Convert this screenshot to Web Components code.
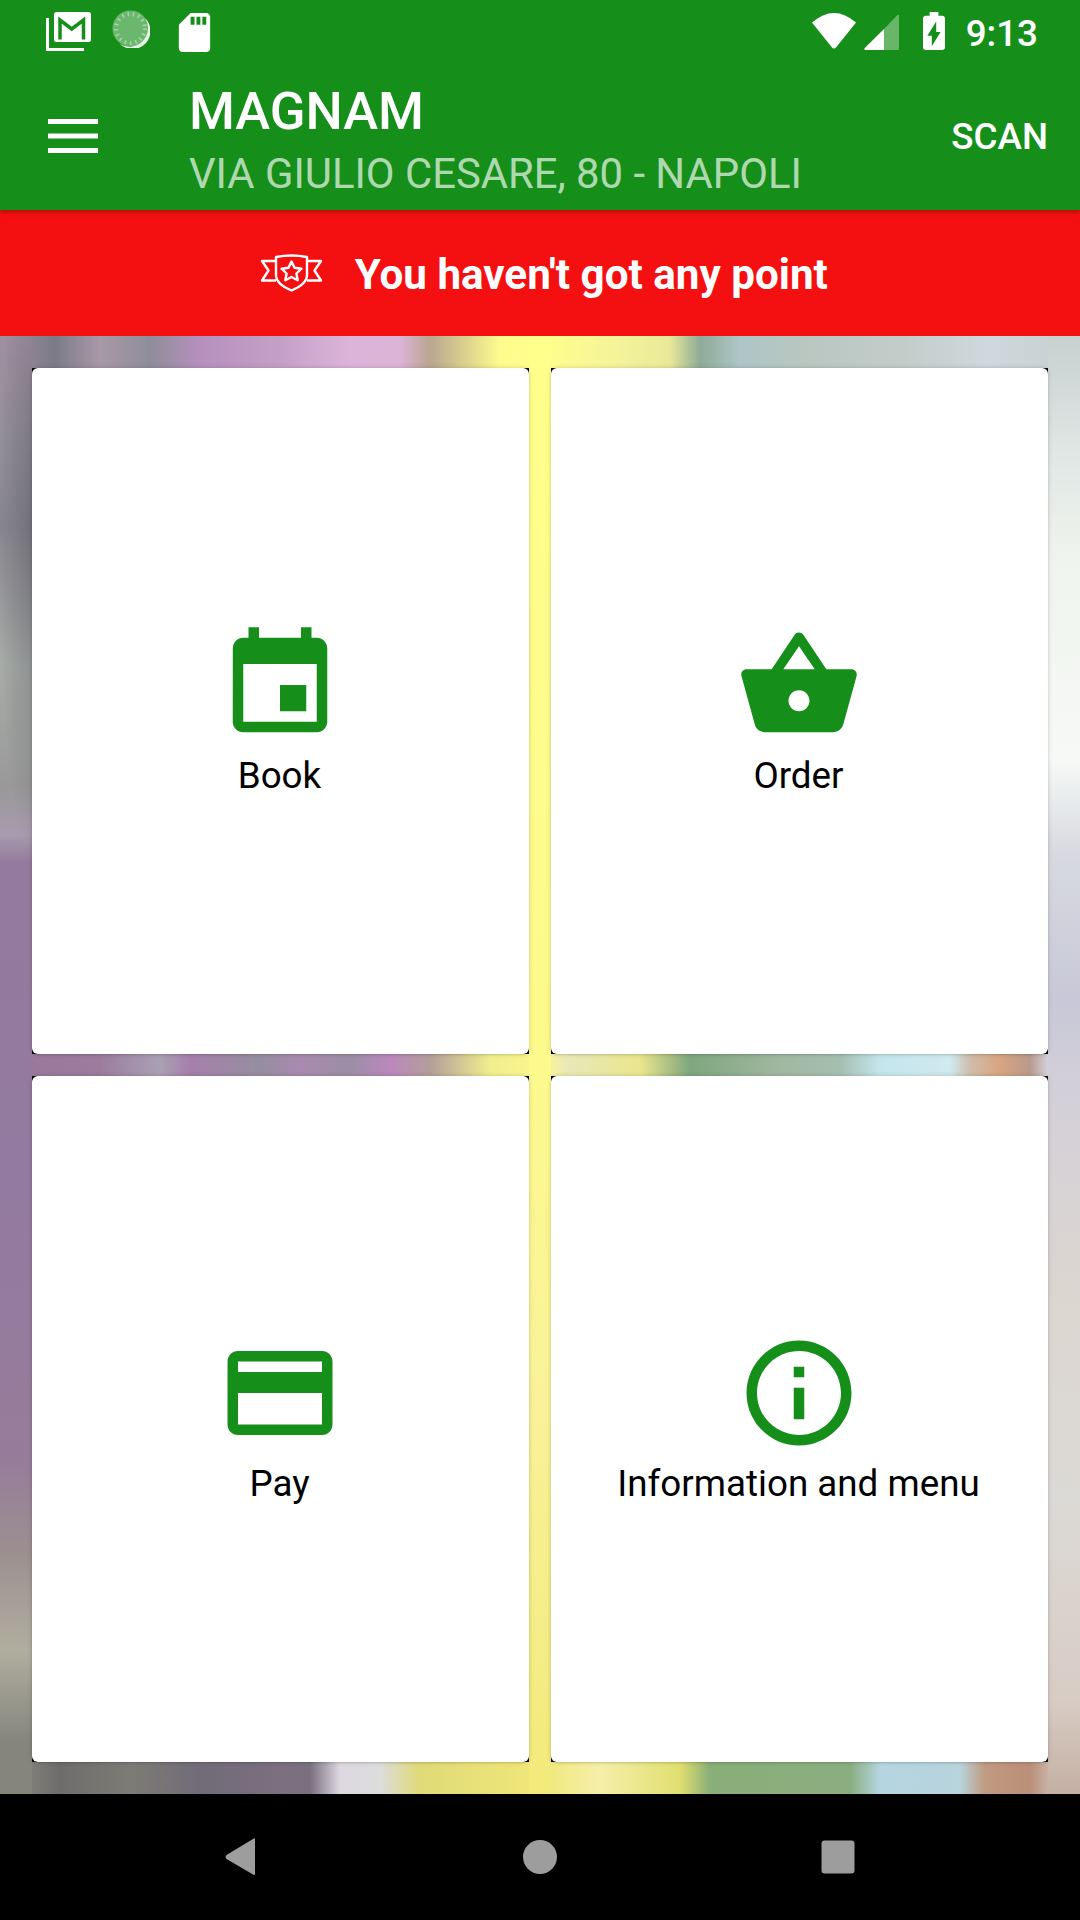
<!DOCTYPE html>
<html>
<head>
<meta charset="utf-8">
<title>Magnam</title>
<style>
    html, body { margin: 0; padding: 0; background: #000; }
    body { font-family: Roboto, "Liberation Sans", sans-serif; }
</style>
</head>
<body>
<magnam-app>
    <magnam-status-bar slot="top"></magnam-status-bar>
    <magnam-toolbar slot="top" title-text="MAGNAM" address="VIA GIULIO CESARE, 80 - NAPOLI" action="SCAN"></magnam-toolbar>
    <magnam-points>You haven't got any point</magnam-points>
    <magnam-tiles>
        <magnam-tile label="Book">
            <svg viewBox="0 0 24 24" fill="#168f1a"><path d="M17 12h-5v5h5v-5zM16 1v2H8V1H6v2H5c-1.11 0-1.99.9-1.99 2L3 19c0 1.1.89 2 2 2h14c1.1 0 2-.9 2-2V5c0-1.1-.9-2-2-2h-1V1h-2zm3 18H5V8h14v11z"/></svg>
        </magnam-tile>
        <magnam-tile label="Order">
            <svg viewBox="0 0 24 24" fill="#168f1a"><path d="M17.21 9l-4.38-6.56c-.19-.28-.51-.42-.83-.42-.32 0-.64.14-.83.43L6.79 9H2c-.55 0-1 .45-1 1 0 .09.01.18.04.27l2.54 9.27c.23.84 1 1.46 1.92 1.46h13c.92 0 1.69-.62 1.93-1.46l2.54-9.27L23 10c0-.55-.45-1-1-1h-4.79zM9 9l3-4.4L15 9H9zm3 8c-1.1 0-2-.9-2-2s.9-2 2-2 2 .9 2 2-.9 2-2 2z"/></svg>
        </magnam-tile>
        <magnam-tile label="Pay">
            <svg viewBox="0 0 24 24" fill="#168f1a"><path d="M20 4H4c-1.11 0-1.99.89-1.99 2L2 18c0 1.11.89 2 2 2h16c1.11 0 2-.89 2-2V6c0-1.11-.89-2-2-2zm0 14H4v-6h16v6zm0-10H4V6h16v2z"/></svg>
        </magnam-tile>
        <magnam-tile label="Information and menu">
            <svg viewBox="0 0 24 24" fill="#168f1a"><path d="M11 7h2v2h-2zm0 4h2v6h-2zm1-9C6.48 2 2 6.48 2 12s4.48 10 10 10 10-4.48 10-10S17.52 2 12 2zm0 18c-4.41 0-8-3.59-8-8s3.59-8 8-8 8 3.59 8 8-3.59 8-8 8z"/></svg>
        </magnam-tile>
    </magnam-tiles>
    <magnam-nav-bar></magnam-nav-bar>
</magnam-app>
<script>
(function () {
    const GREEN = "#168f1a";

    function define(name, html) {
        const template = document.createElement("template");
        template.innerHTML = html;
        customElements.define(name, class extends HTMLElement {
            constructor() {
                super();
                this.attachShadow({ mode: "open" });
                this.shadowRoot.appendChild(template.content.cloneNode(true));
            }
            connectedCallback() {
                this.shadowRoot.querySelectorAll("[data-attr]").forEach((el) => {
                    el.textContent = this.getAttribute(el.dataset.attr) || "";
                });
            }
        });
    }

    define("magnam-app", `
    <style>
        :host { display: flex; flex-direction: column; width: 1080px; height: 1920px; overflow: hidden; }
        .top { position: relative; z-index: 1; background: ${GREEN}; box-shadow: 0 2px 5px rgba(0,0,0,.28); }
    </style>
    <div class="top"><slot name="top"></slot></div>
    <slot></slot>
    `);

    define("magnam-status-bar", `
    <style>
        :host { display: flex; align-items: flex-start; height: 63px; box-sizing: border-box; padding: 0 42px 0 46px; color: #fff; }
        svg { display: block; flex: none; }
        .left { display: flex; flex: 1; align-items: flex-start; }
        .mail { margin-top: 12px; }
        .sync { margin: 10px 0 0 20px; }
        .sd { margin: 9px 0 0 21px; }
        .wifi { margin-top: 13px; }
        .signal { margin: 14px 0 0 8px; }
        .battery { margin: 12px 0 0 23.500px; }
        .clock { margin: 2px 0 0 21px; font: 500 36.75px/63px Roboto, sans-serif; }
    </style>
    <div class="left">
        <svg class="mail" width="46" height="39" viewBox="0 0 46 39">
            <rect x="8" y="0" width="37" height="30" rx="2.5" fill="#fff"/>
            <path d="M14 27.5V8L25.7 17 37.5 8V27.5" fill="none" stroke="${GREEN}" stroke-width="3.5"/>
            <path d="M1.5 6V37.5H38" fill="none" stroke="#fff" stroke-width="3"/>
        </svg>
        <svg class="sync" width="38" height="38" viewBox="0 0 38 38">
            <circle cx="18.5" cy="18.5" r="18" fill="#6cb76e"/>
            <circle cx="18.5" cy="18.5" r="14.5" fill="none" stroke="#a6d3a7" stroke-width="4" stroke-dasharray="1.6 3.8"/>
            <path d="M33 8A18 18 0 0 1 8 34 18.5 18.5 0 0 0 33 8Z" fill="#e8f4e8"/>
        </svg>
        <svg class="sd" width="47" height="47" viewBox="0 0 24 24" fill="#fff"><path d="M18 2h-8L4.02 8 4 20c0 1.1.9 2 2 2h12c1.1 0 2-.9 2-2V4c0-1.1-.9-2-2-2zm-6 6h-2V4h2v4zm3 0h-2V4h2v4zm3 0h-2V4h2v4z"/></svg>
    </div>
    <svg class="wifi" width="44" height="36" viewBox="0 0 44 36">
        <path d="M0 9.500Q22-9.500 44 9.500L24 34.500Q22 36.500 20 34.500Z" fill="#fff"/>
    </svg>
    <svg class="signal" width="35" height="36" viewBox="0 0 35 36">
        <path d="M20 15L33.500 1Q35 0 35 2V34.500Q35 36 33.500 36H20Z" fill="#fff" fill-opacity=".35"/>
        <path d="M20 15V36H1.500Q-.5 36 .8 34Z" fill="#fff"/>
    </svg>
    <svg class="battery" width="22" height="38" viewBox="7 2 10 20" preserveAspectRatio="none" fill="#fff">
        <path d="M15.67 4H14V2h-4v2H8.33C7.6 4 7 4.6 7 5.33v15.33C7 21.4 7.6 22 8.33 22h7.33c.74 0 1.34-.6 1.34-1.33V5.33C17 4.6 16.4 4 15.67 4zM11 20v-5.5H9L13 7v5.5h2L11 20z"/>
    </svg>
    <span class="clock">9:13</span>
    `);

    define("magnam-toolbar", `
    <style>
        :host { display: flex; align-items: center; height: 147px; color: #fff; }
        .nav { flex: none; width: 189px; box-sizing: border-box; padding-left: 48px; margin-top: -2px; }
        .nav svg { display: block; }
        .titles { flex: 1; min-width: 0; display: flex; flex-direction: column; margin-top: 6.5px; }
        .title { font: 500 52.500px/60px Roboto, sans-serif; }
        .address { font: 400 41.800px/50px Roboto, sans-serif; color: rgba(255,255,255,.68); white-space: nowrap; margin-top: 8.500px; }
        .action { flex: none; padding-right: 32px; margin-top: 1px; font: 500 36.750px/44px Roboto, sans-serif; }
    </style>
    <div class="nav">
        <svg width="50" height="34" viewBox="0 0 50 34" fill="#fff">
            <rect width="50" height="5"/><rect y="14.500" width="50" height="5"/><rect y="29" width="50" height="5"/>
        </svg>
    </div>
    <div class="titles">
        <span class="title" data-attr="title-text"></span>
        <span class="address" data-attr="address"></span>
    </div>
    <span class="action" data-attr="action"></span>
    `);

    define("magnam-points", `
    <style>
        :host { display: flex; align-items: center; justify-content: center; gap: 29.500px; height: 126px; box-sizing: border-box; padding-left: 8px; background: #f41010; color: #fff; font: 700 42.200px/50px Roboto, sans-serif; }
        svg { display: block; flex: none; }
        span { margin-top: 4px; }
    </style>
    <svg width="65" height="40" viewBox="0 0 65 40" fill="none" stroke="#fff" stroke-width="2.400" stroke-linejoin="round">
        <path d="M16 4Q31.500 1 47 4V22Q47 31 31.500 37.500 16 31 16 22Z"/>
        <path d="M16 8H2L8.500 17.500 2 27.500H16M47 8H61L54.500 17.500 61 27.500H47"/>
        <path d="M31.500 8.500L34.500 14.800 41.500 15.700 36.400 20.500 37.700 27.300 31.500 24 25.300 27.300 26.600 20.500 21.500 15.700 28.500 14.800Z"/>
    </svg>
    <span><slot></slot></span>
    `);

    define("magnam-tiles", `
    <style>
        :host {
            display: grid; flex: 1; box-sizing: border-box; padding: 32px; gap: 22px;
            grid-template-columns: 1fr 1fr; grid-template-rows: 1fr 1fr;
            background-repeat: no-repeat;
            background-image:
                radial-gradient(ellipse 34px 330px at 32px 190px, rgba(90,90,100,.5), rgba(90,90,100,0)),
                linear-gradient(180deg, #a08fa2 0, #95909a 100px, #8a888f 190px, #a8aca8 330px, #999 450px, #a79bae 499px, #947a9c 527px, #937aa0 844px, #977c9a 1124px, #9c9090 1219px, #b0ae9f 1314px, #85857c 1406px, #85857c 1458px),
                linear-gradient(180deg, #c8d0d0 0, #dfe6e4 114px, #f0f4ee 224px, #f6f9f6 424px, #d8dae0 514px, #c8c8d8 664px, #d4d0d8 764px, #dcd6d0 964px, #dcdad6 1164px, #d8ccc4 1364px, #c4b0a4 1458px),
                linear-gradient(180deg, #ffff8c 0, #fdfa8c 700px, #f9f29a 1064px, #f2ea7a 1458px),
                linear-gradient(90deg, #a08ea0 0, #7c7a88 55px, #a898a8 100px, #8f8d9a 150px, #b690bd 200px, #c5a0c6 280px, #dcb4da 350px, #dcb4d8 400px, #b9a58f 430px, #fdfc8e 500px, #ffff8c 540px, #f4f39a 620px, #e8e898 670px, #8fab98 700px, #aec6c6 740px, #b9c6c0 800px, #c2cdca 900px, #cfd8dc 990px, #c5cfcf 1080px),
                linear-gradient(90deg, #96789a 0, #9c7c9e 100px, #aaa0b4 160px, #a580ab 190px, #968ea0 260px, #a98ab0 300px, #9c8ea4 350px, #bb88bd 390px, #b39e9a 430px, #f0ee8e 490px, #fdf68e 540px, #e8e8b8 570px, #eae68c 640px, #7fa67e 690px, #a0b8a0 780px, #a4bfb0 840px, #c5e5ec 880px, #cfeaf0 950px, #d0bdaa 970px, #d9a481 1000px, #b89a8c 1030px, #d5d0dc 1048px),
                linear-gradient(90deg, #8f8f85 0, #6f6d6c 60px, #7d7b75 130px, #716c78 200px, #7b6f80 280px, #7a7080 310px, #ddd8e0 340px, #dcdcdc 380px, #e0da78 420px, #f0e878 540px, #f5efaa 600px, #e0df70 680px, #8aae78 710px, #8aae80 850px, #b5d5e0 880px, #b8d4dd 960px, #c09a80 985px, #bb8f78 1030px, #d0c8c4 1060px);
            background-size: 32px 527px, 32px 100%, 32px 100%, 22px 100%, 100% 32px, 100% 22px, 100% 32px;
            background-position: 0 0, 0 0, 1048px 0, 529px 0, 0 0, 0 718px, 0 1426px;
        }
    </style>
    <slot></slot>
    `);

    define("magnam-tile", `
    <style>
        :host { display: flex; flex-direction: column; align-items: center; justify-content: center; box-sizing: border-box; padding-right: 2px; background: #fff; border-radius: 6px; box-shadow: 0 0 5px rgba(0,0,0,.16), 0 1px 2px rgba(0,0,0,.1); color: #000; }
        .icon { width: 126px; height: 126px; }
        .icon ::slotted(svg) { display: block; width: 126px; height: 126px; }
        .label { margin: 5.500px 0 3.500px; font: 400 36.750px/43px Roboto, sans-serif; }
    </style>
    <div class="icon"><slot></slot></div>
    <span class="label" data-attr="label"></span>
    `);

    define("magnam-nav-bar", `
    <style>
        :host { display: flex; align-items: center; justify-content: center; gap: 248px; flex: none; height: 126px; background: #000; }
        svg { display: block; flex: none; }
    </style>
    <svg width="50" height="50" viewBox="0 0 50 50" fill="#9d9d9d"><path d="M38 7.500V41.500Q38 44 36 42.500L9.500 27Q7.500 25 9.500 23L36 7Q38 5.500 38 7.500Z"/></svg>
    <svg width="50" height="50" viewBox="0 0 50 50" fill="#9d9d9d"><circle cx="25" cy="25" r="17"/></svg>
    <svg width="50" height="50" viewBox="0 0 50 50" fill="#9d9d9d"><rect x="8.500" y="8.500" width="33" height="33" rx="3"/></svg>
    `);
})();
</script>
</body>
</html>
